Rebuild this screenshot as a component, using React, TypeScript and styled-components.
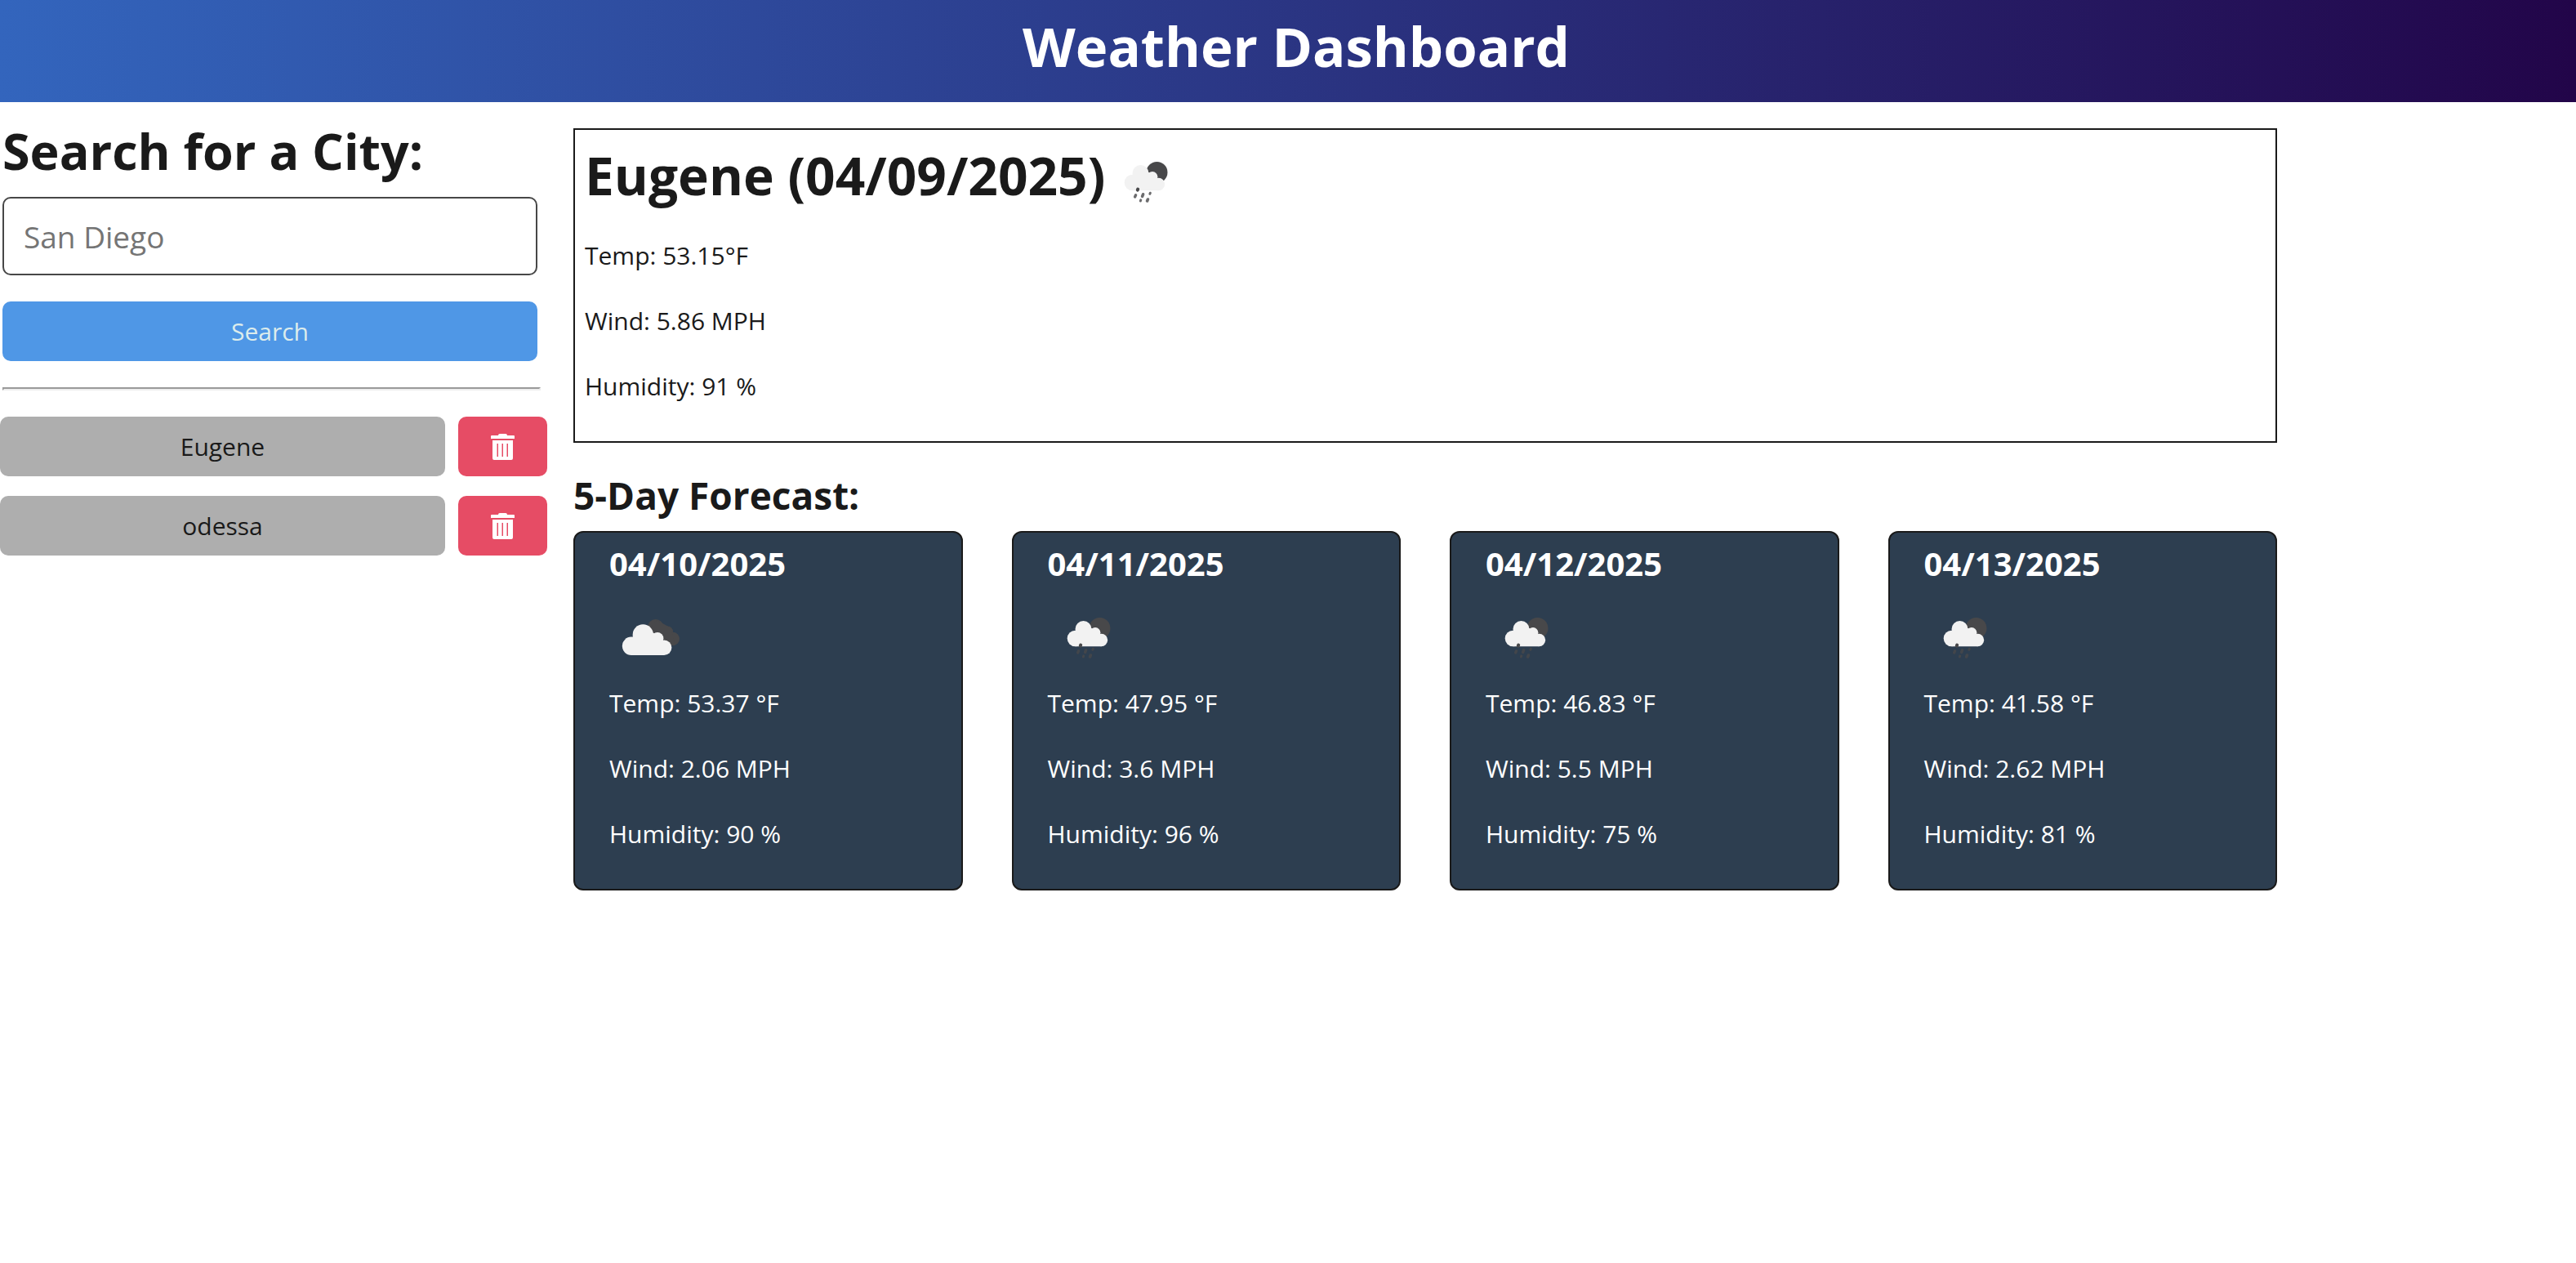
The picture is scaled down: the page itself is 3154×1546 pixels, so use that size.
import React, { useState } from "react";
import styled, { createGlobalStyle } from "styled-components";

const GlobalStyle = createGlobalStyle`
  *, *::before, *::after { box-sizing: border-box; }
  body {
    margin: 0;
    background: #fff;
    color: #1a1a1a;
    font-family: "Segoe UI", "Open Sans", "Noto Sans", sans-serif;
    font-size: 30px;
    line-height: 48px;
  }
  h1, h2, h3, p, ul { margin: 0; padding: 0; }
  button, input { font: inherit; }
`;

const Header = styled.header`
  padding: 8px 0 21px 20px;
  background: linear-gradient(to right, #3365bd, #220549);
  color: #fff;
  text-align: center;
`;

const Title = styled.h1`
  font-size: 67px;
  line-height: 96px;
  font-weight: 700;
`;

const Layout = styled.div`
  display: grid;
  grid-template-columns: minmax(0, 670px) minmax(0, 1fr);
  gap: 32px;
  max-width: 2788px;
`;

const Sidebar = styled.aside`
  padding-top: 20px;
`;

const SearchForm = styled.form`
  display: flex;
  flex-direction: column;
  padding: 0 12px 0 3px;
`;

const SearchLabel = styled.label`
  font-size: 61px;
  line-height: 80px;
  font-weight: 700;
`;

const CityInput = styled.input`
  width: 100%;
  height: 96px;
  margin: 16px 0 32px;
  padding: 0 24px;
  border: 2px solid #474747;
  border-radius: 10px;
  background: #fff;
  color: #1a1a1a;
  font-size: 37px;
  &::placeholder { color: #757575; opacity: 1; }
`;

const Button = styled.button`
  height: 73px;
  padding: 0;
  border: 0;
  border-radius: 10px;
  cursor: pointer;
`;

const SearchButton = styled(Button)`
  background: #4f97e6;
  color: #dcecec;
`;

const Divider = styled.hr`
  margin: 32px 8px 32px 3px;
  border: 2px solid #9a9a9a;
  border-color: #9a9a9a #eee #eee #9a9a9a;
`;

const History = styled.ul`
  display: flex;
  flex-direction: column;
  gap: 24px;
  list-style: none;
`;

const HistoryRow = styled.li`
  display: grid;
  grid-template-columns: 5fr 1fr;
  gap: 16px;
`;

const CityButton = styled(Button)`
  background: #aeaeae;
  color: #1a1a1a;
`;

const DeleteButton = styled(Button)`
  display: flex;
  align-items: center;
  justify-content: center;
  background: #e64c65;
  color: #fff;
`;

const Main = styled.main`
  padding-top: 32px;
`;

const Current = styled.section`
  padding: 14px 12px 43px;
  border: 2px solid #1a1a1a;
`;

const CurrentHeading = styled.div`
  display: flex;
  align-items: flex-start;
  margin-bottom: 16px;
`;

const CurrentTitle = styled.h2`
  font-size: 64px;
  line-height: 84px;
  font-weight: 700;
`;

const Stats = styled.div`
  display: flex;
  flex-direction: column;
  gap: 32px;
`;

const ForecastTitle = styled.h2`
  margin: 32px 0 12px;
  font-size: 46px;
  line-height: 64px;
  font-weight: 700;
`;

const Cards = styled.div`
  display: grid;
  grid-template-columns: repeat(4, minmax(0, 1fr));
  gap: 60px;
`;

const Card = styled.article`
  padding: 13px 42px 43px;
  border: 2px solid #1a1a1a;
  border-radius: 12px;
  background: #2d3e50;
  color: #fff;
`;

const CardDate = styled.h3`
  font-size: 40px;
  line-height: 50px;
  font-weight: 700;
`;

const IconBox = styled.div<{ $spaced?: boolean }>`
  height: 100px;
  margin: ${(p) => (p.$spaced ? "16px 0 6px" : "0")};
  svg { display: block; }
`;

const CLOUD = "#f2f2f2";
const DARK = "#48484a";

function RainIcon() {
  return (
    <svg width="100" height="100" viewBox="0 0 100 100" role="img" aria-label="Rain">
      <circle cx="63.5" cy="38" r="13" fill={DARK} />
      <g fill={CLOUD}>
        <circle cx="33.5" cy="50.5" r="9.8" />
        <circle cx="43.5" cy="39" r="10" />
        <circle cx="58" cy="43.5" r="6.4" />
        <circle cx="65.5" cy="52.5" r="7.7" />
        <path d="M33.5 60.3 L33.5 44 L43 36 L58 39 L66 48 L65.5 60.2 Z" />
      </g>
      <g stroke={DARK} strokeLinecap="round">
        <path d="M40.2 58.6 L39.8 59.6" strokeWidth="4" />
        <g opacity="0.8">
          <path d="M37.6 65.8 L36.6 68" strokeWidth="3.4" />
          <path d="M46.6 64.8 L45.6 67.4" strokeWidth="3.6" />
          <path d="M55.3 63.2 L54.9 64.4" strokeWidth="3" />
          <path d="M43.8 71.8 L43.4 73" strokeWidth="3" />
          <path d="M52.4 71 L51.6 73" strokeWidth="3.6" />
        </g>
      </g>
    </svg>
  );
}

function CloudsIcon() {
  return (
    <svg width="100" height="100" viewBox="0 0 100 100" role="img" aria-label="Broken clouds">
      <g fill={DARK}>
        <circle cx="56.7" cy="36.5" r="9.5" />
        <circle cx="71.5" cy="42" r="6.5" />
        <circle cx="77.8" cy="51" r="8.2" />
        <path d="M48 40 L58 28 L76 38 L80 59 L66 60 Z" />
      </g>
      <g fill={CLOUD}>
        <circle cx="27" cy="59.8" r="11.2" />
        <circle cx="41.3" cy="46" r="12.7" />
        <circle cx="59" cy="50.5" r="7.4" />
        <circle cx="67.2" cy="61.8" r="9.2" />
        <path d="M27 71 L27 50 L41 40 L58 45 L68 56 L67 71 Z" />
      </g>
    </svg>
  );
}

function TrashIcon() {
  return (
    <svg width="29" height="32" viewBox="0 0 29 32" fill="currentColor" aria-hidden="true">
      <path d="M9 2 Q9 0 11 0 H18 Q20 0 20 2 H28 Q29 2 29 3 V6 H0 V3 Q0 2 1 2 Z" />
      <path
        fillRule="evenodd"
        d="M2 8 H27 V30 Q27 32 25 32 H4 Q2 32 2 30 Z M7.5 12 V28 H9 V12 Z M13.5 12 V28 H15 V12 Z M19.5 12 V28 H21 V12 Z"
      />
    </svg>
  );
}

const FORECAST = [
  { date: "04/10/2025", icon: "clouds", temp: "53.37", wind: "2.06", humidity: 90 },
  { date: "04/11/2025", icon: "rain", temp: "47.95", wind: "3.6", humidity: 96 },
  { date: "04/12/2025", icon: "rain", temp: "46.83", wind: "5.5", humidity: 75 },
  { date: "04/13/2025", icon: "rain", temp: "41.58", wind: "2.62", humidity: 81 },
];

export default function App() {
  const [query, setQuery] = useState("");
  const [cities, setCities] = useState(["Eugene", "odessa"]);

  const search = (e: React.FormEvent) => {
    e.preventDefault();
    const name = query.trim();
    if (name && !cities.includes(name)) setCities([...cities, name]);
    setQuery("");
  };

  return (
    <>
      <GlobalStyle />
      <Header>
        <Title>Weather Dashboard</Title>
      </Header>
      <Layout>
        <Sidebar>
          <SearchForm onSubmit={search}>
            <SearchLabel htmlFor="city">Search for a City:</SearchLabel>
            <CityInput
              id="city"
              type="text"
              placeholder="San Diego"
              value={query}
              onChange={(e) => setQuery(e.target.value)}
            />
            <SearchButton type="submit">Search</SearchButton>
          </SearchForm>
          <Divider />
          <History>
            {cities.map((city) => (
              <HistoryRow key={city}>
                <CityButton type="button">{city}</CityButton>
                <DeleteButton
                  type="button"
                  aria-label={`Delete ${city}`}
                  onClick={() => setCities(cities.filter((c) => c !== city))}
                >
                  <TrashIcon />
                </DeleteButton>
              </HistoryRow>
            ))}
          </History>
        </Sidebar>
        <Main>
          <Current>
            <CurrentHeading>
              <CurrentTitle>Eugene (04/09/2025)</CurrentTitle>
              <IconBox>
                <RainIcon />
              </IconBox>
            </CurrentHeading>
            <Stats>
              <p>Temp: 53.15°F</p>
              <p>Wind: 5.86 MPH</p>
              <p>Humidity: 91 %</p>
            </Stats>
          </Current>
          <ForecastTitle>5-Day Forecast:</ForecastTitle>
          <Cards>
            {FORECAST.map((day) => (
              <Card key={day.date}>
                <CardDate>{day.date}</CardDate>
                <IconBox $spaced>{day.icon === "rain" ? <RainIcon /> : <CloudsIcon />}</IconBox>
                <Stats>
                  <p>Temp: {day.temp} °F</p>
                  <p>Wind: {day.wind} MPH</p>
                  <p>Humidity: {day.humidity} %</p>
                </Stats>
              </Card>
            ))}
          </Cards>
        </Main>
      </Layout>
    </>
  );
}
